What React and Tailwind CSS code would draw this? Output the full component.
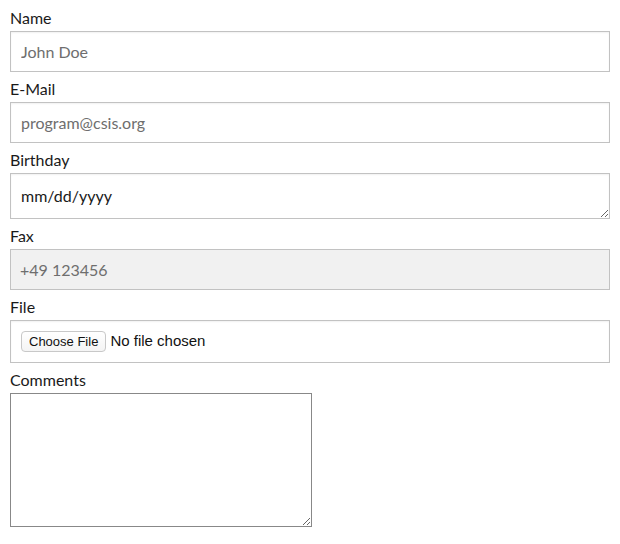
export default function App() {
  const font = { fontFamily: "Lato, 'Noto Sans', sans-serif" };
  return (
    <div className="bg-white w-[620px] h-[544px] px-[10px] pt-[8px] text-[16px] text-[#1a1a1a]" style={font}>
      <div className="leading-[20px] mb-[3px]">Name</div>
      <input
        className="block w-full h-[41px] border border-[#c2c2c2] px-[10px] text-[16px] text-[#222] placeholder:text-[#6e6e6e] outline-none shadow-[inset_0_1px_2px_rgba(0,0,0,0.06)]"
        placeholder="John Doe"
      />
      <div className="leading-[20px] mt-[7px] mb-[3px]">E-Mail</div>
      <input
        className="block w-full h-[41px] border border-[#c2c2c2] px-[10px] text-[16px] text-[#222] placeholder:text-[#6e6e6e] outline-none shadow-[inset_0_1px_2px_rgba(0,0,0,0.06)]"
        placeholder="program@csis.org"
      />
      <div className="leading-[20px] mt-[7px] mb-[3px]">Birthday</div>
      <textarea
        className="block w-full h-[46px] border border-[#c2c2c2] px-[10px] pt-[12px] text-[16px] leading-[20px] text-[#222] placeholder:text-[#1a1a1a] outline-none resize-y shadow-[inset_0_1px_2px_rgba(0,0,0,0.06)]"
        placeholder="mm/dd/yyyy"
      />
      <div className="leading-[20px] mt-[7px] mb-[3px]">Fax</div>
      <input
        className="block w-full h-[41px] border border-[#c2c2c2] bg-[#f1f1f1] px-[9px] text-[16px] text-[#6e6e6e] placeholder:text-[#6e6e6e] outline-none"
        placeholder="+49 123456"
        disabled
      />
      <div className="leading-[20px] mt-[7px] mb-[3px]">File</div>
      <div className="flex items-center h-[43px] border border-[#c2c2c2] px-[10px] gap-[4px] shadow-[inset_0_1px_2px_rgba(0,0,0,0.06)]">
        <button
          className="h-[21px] px-[7px] border border-[#c8c8c8] rounded-[4px] bg-gradient-to-b from-white to-[#f4f4f4] text-[13px] text-[#111] leading-[19px]"
          style={{ fontFamily: "'Liberation Sans', Arial, sans-serif" }}
        >
          Choose File
        </button>
        <span className="text-[15px] text-[#111]" style={{ fontFamily: "'Liberation Sans', Arial, sans-serif" }}>
          No file chosen
        </span>
      </div>
      <div className="leading-[20px] mt-[7px] mb-[3px]">Comments</div>
      <textarea className="block w-[302px] h-[134px] border border-[#888] outline-none resize" />
    </div>
  );
}
